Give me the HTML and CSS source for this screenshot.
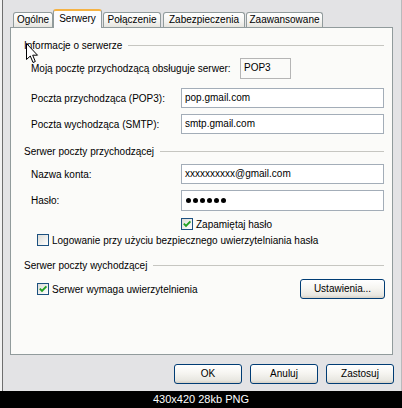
FILE: index.html
```html
<!DOCTYPE html>
<html lang="pl">
<head>
<meta charset="utf-8">
<title>Właściwości konta</title>
<link rel="stylesheet" href="styles.css">
</head>
<body>
<div class="screen">
  <div class="window">
    <div class="strip"></div>
    <div class="dialog">
      <div class="tabs">
        <div class="tab w1">Ogólne</div>
        <div class="tab active w2">Serwery</div>
        <div class="tab w3">Połączenie</div>
        <div class="tab w4">Zabezpieczenia</div>
        <div class="tab w5">Zaawansowane</div>
      </div>
      <div class="panel">
        <div class="gtitle g1">Informacje o serwerze</div>
        <div class="frow r1">
          <span class="label wide">Moją pocztę przychodzącą obsługuje serwer:</span>
          <div class="readonly">POP3</div>
        </div>
        <div class="frow r2">
          <span class="label">Poczta przychodząca (POP3):</span>
          <div class="input">pop.gmail.com</div>
        </div>
        <div class="frow r3">
          <span class="label">Poczta wychodząca (SMTP):</span>
          <div class="input">smtp.gmail.com</div>
        </div>
        <div class="gtitle g2">Serwer poczty przychodzącej</div>
        <div class="frow r4">
          <span class="label">Nazwa konta:</span>
          <div class="input">xxxxxxxxxx@gmail.com</div>
        </div>
        <div class="frow r5">
          <span class="label">Hasło:</span>
          <div class="input tall"><span class="dots"><i></i><i></i><i></i><i></i><i></i><i></i></span></div>
        </div>
        <div class="crow c1">
          <span class="cbox"><svg width="10" height="10" viewBox="0 0 10 10"><path d="M1.8 4.6 L4 6.9 L8.4 2.4" fill="none" stroke="#21a121" stroke-width="1.9"/></svg></span>
          <span>Zapamiętaj hasło</span>
        </div>
        <div class="crow c2">
          <span class="cbox"></span>
          <span>Logowanie przy użyciu bezpiecznego uwierzytelniania hasła</span>
        </div>
        <div class="gtitle g3">Serwer poczty wychodzącej</div>
        <div class="lrow">
          <div class="crow c3">
            <span class="cbox"><svg width="10" height="10" viewBox="0 0 10 10"><path d="M1.8 4.6 L4 6.9 L8.4 2.4" fill="none" stroke="#21a121" stroke-width="1.9"/></svg></span>
            <span>Serwer wymaga uwierzytelnienia</span>
          </div>
          <div class="btn settings">Ustawienia...</div>
        </div>
      </div>
      <div class="buttons">
        <div class="btn">OK</div>
        <div class="btn">Anuluj</div>
        <div class="btn">Zastosuj</div>
      </div>
    </div>
    <svg class="cursor" width="13" height="21" viewBox="0 0 13 21"><path d="M0.5 0.5 V16.5 L4.3 13 L7 19.5 L9.3 18.5 L6.7 12.2 H11.5 Z" fill="#fff" stroke="#000" stroke-width="1"/></svg>
  </div>
  <div class="caption">430x420 28kb PNG</div>
</div>
</body>
</html>
```

FILE: styles.css
```css
html, body {
  margin: 0;
  padding: 0;
  background: #000;
}

body {
  font-family: "Liberation Sans", Arial, sans-serif;
  font-size: 10px;
  color: #000;
}

.screen {
  width: 402px;
  height: 408px;
  overflow: hidden;
  display: flex;
  flex-direction: column;
}

.window {
  position: relative;
  height: 391px;
  display: flex;
  flex: none;
}

.strip {
  width: 3px;
  background: #f2f2f2;
  border-right: 1px solid #6e6e6e;
}

.dialog {
  flex: 1;
  display: flex;
  flex-direction: column;
  box-sizing: border-box;
  background: #e3e3e5;
  padding: 9px 8px 7px 7px;
  border-right: 1px solid #b9b9bc;
}

/* tabs */
.tabs {
  display: flex;
  align-items: flex-end;
  height: 19px;
  padding-left: 3px;
  margin-bottom: -1px;
  position: relative;
  z-index: 1;
}

.tab {
  box-sizing: border-box;
  height: 15px;
  margin-bottom: 1px;
  border: 1px solid #919b9c;
  border-bottom: none;
  border-radius: 3px 3px 0 0;
  background: linear-gradient(#ffffff, #f4f4f1 60%, #e6e5df);
  text-align: center;
  line-height: 14px;
  white-space: nowrap;
}

.tab.active {
  height: 19px;
  margin-bottom: 0;
  background: #fcfcfe;
  border-top: 2px solid #f5b243;
  line-height: 16px;
}

.w1 { width: 40px; }
.w2 { width: 49px; }
.w3 { width: 58px; margin-left: 1px; }
.w4 { width: 82px; margin-left: 2px; }
.w5 { width: 77px; margin-left: 1px; }

/* panel */
.panel {
  flex: 1;
  display: flex;
  flex-direction: column;
  background: #fbfbf9;
  border: 1px solid #919b9c;
  padding: 0 8px 0 13px;
}

.gtitle {
  display: flex;
  align-items: center;
  gap: 6px;
  height: 14px;
  white-space: nowrap;
}

.gtitle::after {
  content: "";
  flex: 1;
  height: 1px;
  background: #c6c6c1;
}

.g1 { margin-top: 10px; }
.g2 { margin-top: 10px; }
.g3 { margin-top: 11px; }

.frow {
  display: flex;
  align-items: center;
  margin-left: 7px;
}

.label {
  width: 150px;
  flex: none;
  white-space: nowrap;
}

.label.wide { width: 209px; }

.input {
  box-sizing: border-box;
  width: 203px;
  height: 20px;
  border: 1px solid #a3adb8;
  background: #fff;
  padding: 0 3px;
  line-height: 18px;
  display: flex;
  align-items: center;
}

.input.tall { height: 21px; }

.readonly {
  box-sizing: border-box;
  width: 51px;
  height: 21px;
  border: 1px solid #b5b5b5;
  padding: 1px 3px;
  line-height: 16px;
}

.r1 { margin-top: 6px; }
.r2 { margin-top: 9px; }
.r3 { margin-top: 6px; }
.r4 { margin-top: 6px; }
.r5 { margin-top: 6px; }

.dots {
  display: flex;
  gap: 2px;
  padding-left: 1px;
}

.dots i {
  width: 5px;
  height: 5px;
  border-radius: 50%;
  background: #000;
}

/* checkboxes */
.crow {
  display: flex;
  align-items: center;
  gap: 3px;
  height: 14px;
  white-space: nowrap;
}

.c1 { margin-top: 6px; margin-left: 157px; }
.c2 { margin-top: 2px; margin-left: 13px; }
.c3 { margin-left: 13px; }

.cbox {
  box-sizing: border-box;
  width: 12px;
  height: 12px;
  border: 1px solid #1c5180;
  background: linear-gradient(135deg, #dcdcd7, #ffffff);
  display: flex;
  align-items: center;
  justify-content: center;
}

.lrow {
  display: flex;
  align-items: center;
  justify-content: space-between;
  height: 20px;
  margin-top: 7px;
  margin-right: -1px;
}

/* buttons */
.btn {
  box-sizing: border-box;
  height: 20px;
  border: 1px solid #003c74;
  border-radius: 3px;
  background: linear-gradient(#ffffff, #f6f5f1 45%, #e8e7e1 85%, #d6d0c5);
  text-align: center;
  line-height: 18px;
  white-space: nowrap;
}

.settings { width: 85px; }

.buttons {
  display: flex;
  justify-content: flex-end;
  gap: 8px;
  margin: 9px -1px 0 0;
}

.buttons .btn { width: 68px; }

/* overlays */
.cursor {
  position: absolute;
  left: 26px;
  top: 43px;
}

.caption {
  flex: 1;
  color: #fff;
  font-size: 11px;
  line-height: 17px;
  text-align: center;
}
```
